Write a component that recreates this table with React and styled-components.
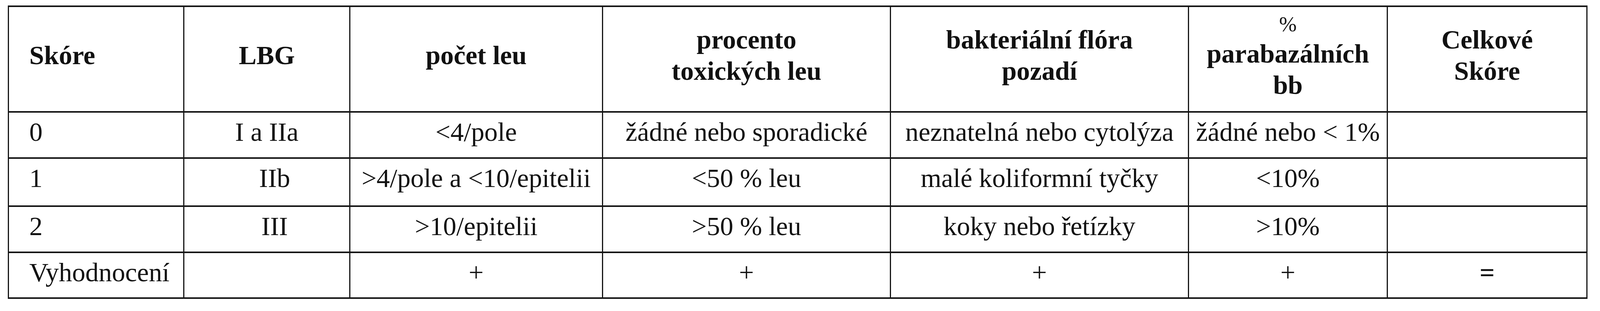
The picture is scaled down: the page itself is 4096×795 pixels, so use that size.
import React from "react";
import styled, { createGlobalStyle } from "styled-components";

const GlobalStyle = createGlobalStyle`
  html, body {
    margin: 0;
    padding: 0;
    background: #ffffff;
  }
  body {
    font-family: "Liberation Serif", "Times New Roman", serif;
    color: #111111;
  }
`;

const columns = [
  { key: "score", width: 449, align: "left" },
  { key: "lbg", width: 425 },
  { key: "count", width: 647 },
  { key: "toxic", width: 737 },
  { key: "flora", width: 763 },
  { key: "para", width: 509 },
  { key: "total", width: 511 },
];

const header = [
  ["Skóre"],
  ["LBG"],
  ["počet leu"],
  ["procento", "toxických leu"],
  ["bakteriální flóra", "pozadí"],
  ["%", "parabazálních", "bb"],
  ["Celkové", "Skóre"],
];

// offset: the scan has "IIb" and "III" sitting a little right of centre
const rows = [
  { height: 118, cells: ["0", "I a IIa", "<4/pole", "žádné nebo sporadické", "neznatelná nebo cytolýza", "žádné nebo < 1%", ""] },
  { height: 123, offset: 1, cells: ["1", "IIb", ">4/pole a <10/epitelii", "<50 % leu", "malé koliformní tyčky", "<10%", ""] },
  { height: 118, offset: 1, cells: ["2", "III", ">10/epitelii", ">50 % leu", "koky nebo řetízky", ">10%", ""] },
  { height: 117, cells: ["Vyhodnocení", "", "+", "+", "+", "+", "="] },
];

const Page = styled.div`
  padding: 14px 0 0 20px;
`;

const Table = styled.table`
  border-collapse: collapse;
  table-layout: fixed;
  width: 4041px;
  font-size: 68px;
  line-height: 1.17;
`;

const HeadCell = styled.th`
  width: ${(p) => p.$width}px;
  height: 270px;
  box-sizing: border-box;
  border: 3px solid #151515;
  border-top-width: 4px;
  border-bottom-width: 4px;
  padding: 0 0 18px ${(p) => (p.$align === "left" ? "52px" : "0")};
  text-align: ${(p) => p.$align || "center"};
  vertical-align: middle;
  font-weight: bold;
  white-space: nowrap;
`;

const Line = styled.div`
  font-size: ${(p) => (p.$small ? "54px" : "inherit")};
  font-weight: ${(p) => (p.$small ? "normal" : "bold")};
  line-height: ${(p) => (p.$small ? "72px" : "inherit")};
`;

const BodyCell = styled.td`
  height: ${(p) => p.$height}px;
  box-sizing: border-box;
  border: 3px solid #151515;
  border-top-width: 4px;
  border-bottom-width: 4px;
  padding: 10px 0 0 ${(p) => (p.$align === "left" ? 52 : p.$shift ? 40 : 0)}px;
  text-align: ${(p) => p.$align || "center"};
  vertical-align: top;
  font-weight: ${(p) => (p.$strong ? "bold" : "normal")};
  white-space: nowrap;
`;

export default function App() {
  return (
    <>
      <GlobalStyle />
      <Page>
        <Table>
          <thead>
            <tr>
              {header.map((lines, i) => (
                <HeadCell key={columns[i].key} $width={columns[i].width} $align={columns[i].align}>
                  {lines.map((text) => (
                    <Line key={text} $small={text === "%"}>
                      {text}
                    </Line>
                  ))}
                </HeadCell>
              ))}
            </tr>
          </thead>
          <tbody>
            {rows.map((row) => (
              <tr key={row.cells[0]}>
                {row.cells.map((text, i) => (
                  <BodyCell
                    key={columns[i].key}
                    $height={row.height}
                    $align={columns[i].align}
                    $shift={row.offset === i}
                    $strong={text === "="}
                  >
                    {text}
                  </BodyCell>
                ))}
              </tr>
            ))}
          </tbody>
        </Table>
      </Page>
    </>
  );
}
